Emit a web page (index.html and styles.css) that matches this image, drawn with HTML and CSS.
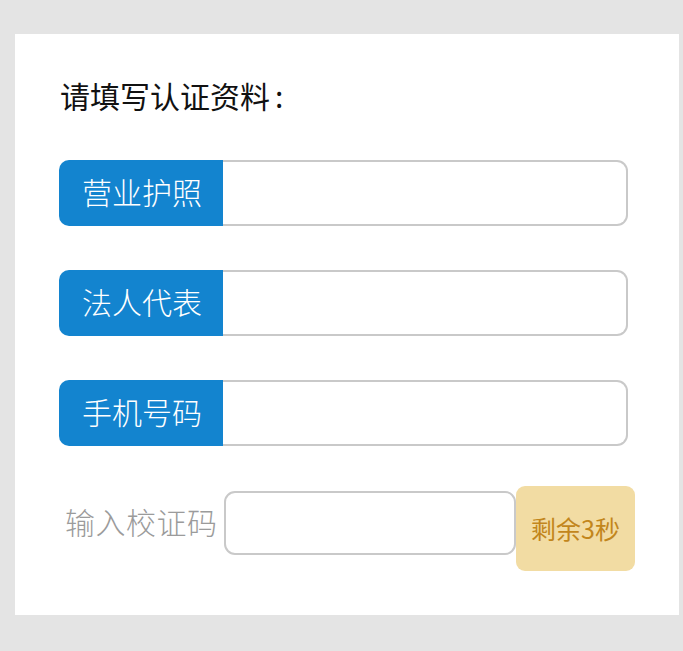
FILE: index.html
```html
<!DOCTYPE html>
<html lang="zh-CN">
<head>
<meta charset="utf-8">
<title>认证资料</title>
<link rel="stylesheet" href="styles.css">
</head>
<body>
<div class="card">
  <h1 class="title">请填写认证资料<span class="colon">:</span></h1>
  <div class="field">
    <div class="field-label">营业护照</div>
    <div class="field-input"></div>
  </div>
  <div class="field">
    <div class="field-label">法人代表</div>
    <div class="field-input"></div>
  </div>
  <div class="field">
    <div class="field-label">手机号码</div>
    <div class="field-input"></div>
  </div>
  <div class="verify">
    <div class="verify-main">
      <div class="verify-label">输入校证码</div>
      <div class="verify-input"></div>
    </div>
    <div class="verify-btn">剩余3秒</div>
  </div>
</div>
</body>
</html>
```

FILE: styles.css
```css
html, body {
  margin: 0;
  padding: 0;
}
body {
  background: #e4e4e4;
  padding-top: 34px;
  padding-left: 15px;
  font-family: "Noto Sans CJK SC", "Noto Sans", sans-serif;
}
.card {
  box-sizing: border-box;
  width: 664px;
  height: 581px;
  background: #ffffff;
  padding: 41px 51px 0 44px;
}
.title {
  margin: 0;
  font-size: 30px;
  font-weight: 400;
  line-height: 40px;
  color: #111111;
  padding-left: 1px;
}
.colon {
  margin-left: 5px;
}
.field {
  display: flex;
  height: 66px;
  margin-top: 45px;
}
.field + .field {
  margin-top: 44px;
}
.field-label {
  box-sizing: border-box;
  width: 164px;
  flex: none;
  background: #1384cf;
  color: #ffffff;
  font-size: 30px;
  font-weight: 300;
  line-height: 62px;
  padding-left: 23px;
  border-radius: 10px 0 0 10px;
}
.field-input {
  flex: 1;
  border: 2px solid #c9c9c9;
  border-left: none;
  border-radius: 0 11px 11px 0;
}
.verify {
  display: flex;
  align-items: flex-start;
  margin-top: 40px;
  margin-left: 6px;
}
.verify-main {
  display: flex;
  flex: none;
  align-items: center;
  margin-top: 5px;
}
.verify-label {
  flex: none;
  width: 159px;
  font-size: 30px;
  font-weight: 300;
  color: #9b9b9b;
  line-height: 40px;
  letter-spacing: 0.5px;
  margin-top: -4px;
}
.verify-input {
  flex: none;
  box-sizing: border-box;
  width: 292px;
  height: 64px;
  border: 2px solid #c9c9c9;
  border-radius: 11px;
}
.verify-btn {
  flex: none;
  box-sizing: border-box;
  width: 119px;
  height: 85px;
  background: #f2dca3;
  color: #c2861c;
  border-radius: 9px;
  font-size: 25px;
  line-height: 85px;
  text-align: center;
}
```
